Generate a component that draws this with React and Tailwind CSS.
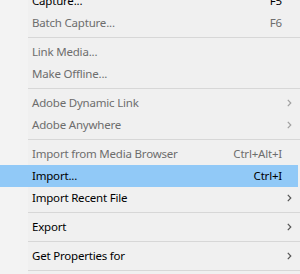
import React from 'react';

const items = [
  { label: 'Capture...', shortcut: 'F5' },
  { label: 'Batch Capture...', shortcut: 'F6', disabled: true },
  { sep: true },
  { label: 'Link Media...', disabled: true },
  { label: 'Make Offline...', disabled: true },
  { sep: true },
  { label: 'Adobe Dynamic Link', disabled: true, sub: true },
  { label: 'Adobe Anywhere', disabled: true, sub: true },
  { sep: true },
  { label: 'Import from Media Browser', shortcut: 'Ctrl+Alt+I', disabled: true },
  { label: 'Import...', shortcut: 'Ctrl+I', active: true },
  { label: 'Import Recent File', sub: true },
  { sep: true },
  { label: 'Export', sub: true },
  { sep: true },
  { label: 'Get Properties for', sub: true },
  { sep: true },
];

function Chevron({ disabled }) {
  return (
    <svg width="5" height="8" viewBox="0 0 5 8" className="block">
      <path d="M0.8 0.8 L3.8 4 L0.8 7.2" fill="none" stroke={disabled ? '#a0a0a0' : '#555555'} strokeWidth="1.2" />
    </svg>
  );
}

function MenuRow({ item }) {
  if (item.sep) {
    return (
      <div className="flex h-[7px]">
        <div className="w-[28px] bg-[#f3f3f3]" />
        <div className="flex-1 mt-[3px] h-px bg-[#d7d7d7]" />
      </div>
    );
  }
  const text = item.disabled ? 'text-[#6d6d6d]' : 'text-black';
  const gutter = item.active ? 'bg-[#91c9f7]' : 'bg-[#f3f3f3]';
  return (
    <div className={`flex h-[22px] items-center mr-[2px] ${item.active ? 'bg-[#91c9f7]' : ''}`}>
      <div className={`w-[28px] h-full shrink-0 ${gutter}`} />
      <span className={`flex-1 pl-[4px] whitespace-nowrap ${text}`}>{item.label}</span>
      <span className={`w-[70px] text-right whitespace-nowrap ${text}`}>{item.shortcut}</span>
      <div className="w-[16px] h-full flex items-center pl-[5px]">
        {item.sub && <Chevron disabled={item.disabled} />}
      </div>
    </div>
  );
}

export default function App() {
  return (
    <div className="w-[300px] h-[274px] overflow-hidden bg-[#f0f0f0]">
      <div className="-mt-[10px] text-[11.5px] tracking-[-0.2px] leading-[16px] font-['Noto_Sans',sans-serif]">
        {items.map((item, i) => (
          <MenuRow key={i} item={item} />
        ))}
      </div>
    </div>
  );
}
